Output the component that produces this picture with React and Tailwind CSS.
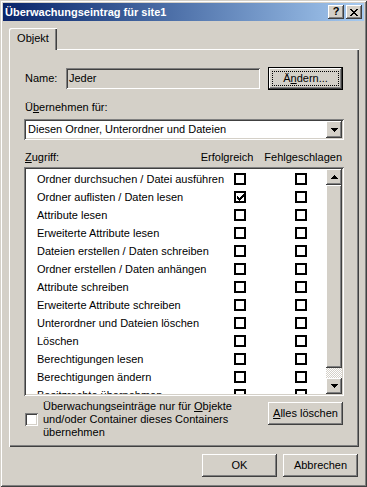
import React from 'react';

const raised = 'bg-[#d4d0c8] shadow-[inset_-1px_-1px_#404040,inset_1px_1px_#ffffff,inset_-2px_-2px_#808080,inset_2px_2px_#d4d0c8]';
const sunken = 'shadow-[inset_1px_1px_#808080,inset_-1px_-1px_#ffffff,inset_2px_2px_#404040,inset_-2px_-2px_#d4d0c8]';

const eintraege = [
  ['Ordner durchsuchen / Datei ausführen', false],
  ['Ordner auflisten / Daten lesen', true],
  ['Attribute lesen', false],
  ['Erweiterte Attribute lesen', false],
  ['Dateien erstellen / Daten schreiben', false],
  ['Ordner erstellen / Daten anhängen', false],
  ['Attribute schreiben', false],
  ['Erweiterte Attribute schreiben', false],
  ['Unterordner und Dateien löschen', false],
  ['Löschen', false],
  ['Berechtigungen lesen', false],
  ['Berechtigungen ändern', false],
  ['Besitzrechte übernehmen', false],
];

function PfeilOben() {
  return (
    <svg width="7" height="4" viewBox="0 0 7 4" shapeRendering="crispEdges">
      <rect x="3" y="0" width="1" height="1" fill="#000" />
      <rect x="2" y="1" width="3" height="1" fill="#000" />
      <rect x="1" y="2" width="5" height="1" fill="#000" />
      <rect x="0" y="3" width="7" height="1" fill="#000" />
    </svg>
  );
}

function PfeilUnten() {
  return (
    <svg width="7" height="4" viewBox="0 0 7 4" shapeRendering="crispEdges">
      <rect x="0" y="0" width="7" height="1" fill="#000" />
      <rect x="1" y="1" width="5" height="1" fill="#000" />
      <rect x="2" y="2" width="3" height="1" fill="#000" />
      <rect x="3" y="3" width="1" height="1" fill="#000" />
    </svg>
  );
}

function Haken() {
  return (
    <svg width="7" height="7" viewBox="0 0 7 7" shapeRendering="crispEdges">
      <rect x="6" y="0" width="1" height="1" fill="#000" />
      <rect x="5" y="1" width="2" height="1" fill="#000" />
      <rect x="0" y="2" width="1" height="1" fill="#000" />
      <rect x="4" y="2" width="3" height="1" fill="#000" />
      <rect x="0" y="3" width="2" height="1" fill="#000" />
      <rect x="3" y="3" width="3" height="1" fill="#000" />
      <rect x="0" y="4" width="5" height="1" fill="#000" />
      <rect x="1" y="5" width="3" height="1" fill="#000" />
      <rect x="2" y="6" width="1" height="1" fill="#000" />
    </svg>
  );
}

function Kasten({ an }) {
  return (
    <span className="w-[12px] h-[12px] border-2 border-black bg-white flex items-center justify-center shrink-0">
      {an && <Haken />}
    </span>
  );
}

export default function App() {
  return (
    <div className="w-[367px] h-[487px] p-[3px] flex flex-col bg-[#d4d0c8] text-[11px] leading-[13px] text-black font-['Liberation_Sans',Arial,sans-serif] shadow-[inset_1px_1px_#d4d0c8,inset_-1px_-1px_#404040,inset_2px_2px_#ffffff,inset_-2px_-2px_#808080]">
      {/* Titelleiste */}
      <div className="h-[18px] flex items-center justify-between pl-[2px] pr-[2px] bg-linear-to-r from-[#0a246a] to-[#a6caf0]">
        <span className="text-white font-bold">Überwachungseintrag für site1</span>
        <div className="flex gap-[2px]">
          <span className={`w-[16px] h-[14px] flex items-center justify-center font-bold text-[11px] pb-[1px] ${raised}`}>?</span>
          <span className={`w-[16px] h-[14px] flex items-center justify-center ${raised}`}>
            <svg width="8" height="7" viewBox="0 0 8 7" shapeRendering="crispEdges">
              <rect x="0" y="0" width="2" height="1" fill="#000" />
              <rect x="6" y="0" width="2" height="1" fill="#000" />
              <rect x="1" y="1" width="2" height="1" fill="#000" />
              <rect x="5" y="1" width="2" height="1" fill="#000" />
              <rect x="2" y="2" width="4" height="1" fill="#000" />
              <rect x="3" y="3" width="2" height="1" fill="#000" />
              <rect x="2" y="4" width="4" height="1" fill="#000" />
              <rect x="1" y="5" width="2" height="1" fill="#000" />
              <rect x="5" y="5" width="2" height="1" fill="#000" />
              <rect x="0" y="6" width="2" height="1" fill="#000" />
              <rect x="6" y="6" width="2" height="1" fill="#000" />
            </svg>
          </span>
        </div>
      </div>

      <div className="flex flex-col pt-[7px] ml-[6px] mr-[5px]">
        {/* Register */}
        <div className="relative z-10 ml-[0px] w-[48px] h-[22px] -mb-[1px] bg-[#d4d0c8] rounded-tl-[2px] flex items-center justify-center pb-[2px] shadow-[inset_1px_1px_#ffffff,inset_-1px_0_#404040,inset_-2px_0_#808080]">
          Objekt
        </div>

        {/* Panel */}
        <div className="h-[398px] flex flex-col pt-[18px] pl-[15px] pr-[15px] shadow-[inset_1px_1px_#ffffff,inset_-1px_-1px_#404040,inset_-2px_-2px_#808080]">
          <div className="h-[23px] flex items-center">
            <span className="w-[42px] pl-[1px]">Name:</span>
            <div className={`w-[194px] h-[21px] flex items-center pl-[3px] bg-[#d4d0c8] ${sunken}`}>Jeder</div>
            <button className={`relative ml-auto mr-[1px] w-[75px] h-[23px] border border-black flex items-center justify-center ${raised}`}>
              <span>Ä<span className="underline">n</span>dern...</span>
              <span className="absolute inset-[3px] border border-dotted border-black" />
            </button>
          </div>

          <div className="mt-[11px] pl-[1px]">
            Ü<span className="underline">b</span>ernehmen für:
          </div>
          <div className={`mt-[5px] h-[21px] flex items-center bg-white pl-[4px] pr-[2px] ${sunken}`}>
            <span className="flex-1">Diesen Ordner, Unterordner und Dateien</span>
            <span className={`w-[16px] h-[17px] flex items-center justify-center ${raised}`}>
              <PfeilUnten />
            </span>
          </div>

          <div className="mt-[11px] flex pl-[1px] pr-[2px]">
            <span className="flex-1"><span className="underline">Z</span>ugriff:</span>
            <span>Erfolgreich</span>
            <span className="ml-[11px]">Fehlgeschlagen</span>
          </div>

          <div className={`mt-[3px] h-[229px] flex bg-white p-[2px] ${sunken}`}>
            <div className="flex-1 flex flex-col pt-[1px] overflow-hidden">
              {eintraege.map(([text, an]) => (
                <div key={text} className="h-[18px] shrink-0 flex items-center">
                  <span className="w-[208px] shrink-0 pl-[11px] whitespace-nowrap">{text}</span>
                  <Kasten an={an} />
                  <span className="ml-[49px]">
                    <Kasten an={false} />
                  </span>
                </div>
              ))}
            </div>
            <div className="w-[16px] flex flex-col">
              <span className={`h-[16px] flex items-center justify-center ${raised}`}>
                <PfeilOben />
              </span>
              <span className={`flex-1 ${raised}`} />
              <span className="h-[10px] bg-[image:repeating-conic-gradient(#d4d0c8_0_25%,#ffffff_0_50%)] bg-[length:2px_2px]" />
              <span className={`h-[16px] flex items-center justify-center ${raised}`}>
                <PfeilUnten />
              </span>
            </div>
          </div>

          <div className="mt-[4px] flex items-start">
            <div className="flex items-center flex-1">
              <span className={`w-[13px] h-[13px] ml-[1px] bg-white shrink-0 ${sunken}`} />
              <span className="ml-[5px]">
                Überwachungseinträge nur für <span className="underline">O</span>bjekte<br />
                und/oder Container dieses Containers<br />
                übernehmen
              </span>
            </div>
            <button className={`mt-[2px] mr-[1px] w-[75px] h-[23px] flex items-center justify-center ${raised}`}>
              <span><span className="underline">A</span>lles löschen</span>
            </button>
          </div>
        </div>

        <div className="mt-[7px] flex justify-end gap-[6px] pr-[1px]">
          <button className={`w-[75px] h-[23px] flex items-center justify-center ${raised}`}>OK</button>
          <button className={`w-[75px] h-[23px] flex items-center justify-center ${raised}`}>Abbrechen</button>
        </div>
      </div>
    </div>
  );
}
